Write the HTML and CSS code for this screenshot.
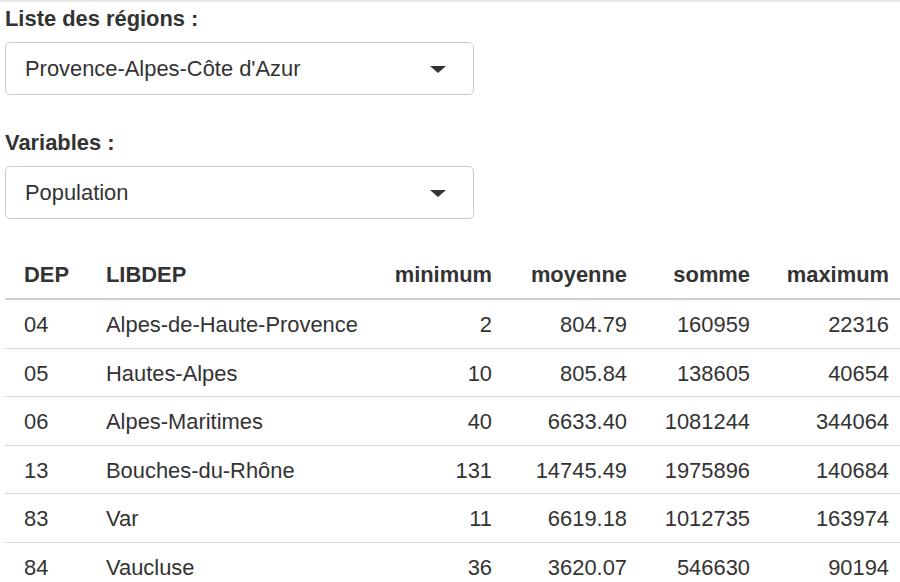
FILE: index.html
```html
<!DOCTYPE html>
<html lang="fr">
<head>
<meta charset="utf-8">
<title>Régions</title>
<link rel="stylesheet" href="styles.css">
</head>
<body>
<div class="topbar"></div>
<main class="page">
  <div class="field">
    <label class="field-label">Liste des régions :</label>
    <div class="select"><span class="select-value">Provence-Alpes-Côte d'Azur</span><span class="caret"></span></div>
  </div>
  <div class="field">
    <label class="field-label">Variables :</label>
    <div class="select"><span class="select-value">Population</span><span class="caret"></span></div>
  </div>
  <table class="data">
    <colgroup>
      <col class="c-dep"><col class="c-lib"><col class="c-min"><col class="c-moy"><col class="c-som"><col class="c-max">
    </colgroup>
    <thead>
      <tr><th class="first">DEP</th><th>LIBDEP</th><th class="num">minimum</th><th class="num">moyenne</th><th class="num">somme</th><th class="num">maximum</th></tr>
    </thead>
    <tbody>
      <tr><td class="first">04</td><td>Alpes-de-Haute-Provence</td><td class="num">2</td><td class="num">804.79</td><td class="num">160959</td><td class="num">22316</td></tr>
      <tr><td class="first">05</td><td>Hautes-Alpes</td><td class="num">10</td><td class="num">805.84</td><td class="num">138605</td><td class="num">40654</td></tr>
      <tr><td class="first">06</td><td>Alpes-Maritimes</td><td class="num">40</td><td class="num">6633.40</td><td class="num">1081244</td><td class="num">344064</td></tr>
      <tr><td class="first">13</td><td>Bouches-du-Rhône</td><td class="num">131</td><td class="num">14745.49</td><td class="num">1975896</td><td class="num">140684</td></tr>
      <tr><td class="first">83</td><td>Var</td><td class="num">11</td><td class="num">6619.18</td><td class="num">1012735</td><td class="num">163974</td></tr>
      <tr><td class="first">84</td><td>Vaucluse</td><td class="num">36</td><td class="num">3620.07</td><td class="num">546630</td><td class="num">90194</td></tr>
    </tbody>
  </table>
</main>
</body>
</html>
```

FILE: styles.css
```css
html, body {
  margin: 0;
  padding: 0;
  background: #fff;
}
body {
  font-family: "Liberation Sans", Arial, sans-serif;
  font-size: 21.9px;
  line-height: 28px;
  color: #333;
  overflow: hidden;
}
.topbar {
  height: 2px;
  background: #e6e6e6;
}
.page {
  padding: 3px 0 0 5px;
}
.field {
  margin-bottom: 34px;
}
.field-label {
  display: block;
  font-weight: bold;
  margin-bottom: 9px;
}
.select {
  box-sizing: border-box;
  width: 469px;
  height: 53px;
  border: 1px solid #cccccc;
  border-radius: 5px;
  display: flex;
  align-items: center;
  justify-content: space-between;
  padding: 0 27px 0 19px;
}
.caret {
  width: 0;
  height: 0;
  border-left: 8px solid transparent;
  border-right: 8px solid transparent;
  border-top: 7px solid #333;
  margin-top: 1px;
}
.data {
  border-collapse: collapse;
  table-layout: fixed;
  width: 895px;
  margin-top: -2px;
}
.c-dep { width: 90px; }
.c-lib { width: 275px; }
.c-min { width: 133px; }
.c-moy { width: 135px; }
.c-som { width: 123px; }
.c-max { width: 139px; }
.data th, .data td {
  padding: 0 11px;
  text-align: left;
  white-space: nowrap;
}
.data th {
  font-weight: bold;
  color: #333;
  padding-top: 10px;
  padding-bottom: 9px;
  border-bottom: 2px solid #cfcfcf;
}
.data td {
  padding-top: 11px;
  padding-bottom: 8.5px;
  border-bottom: 1px solid #dadada;
}
.data .first {
  padding-left: 19px;
}
.data .num {
  text-align: right;
}
```
